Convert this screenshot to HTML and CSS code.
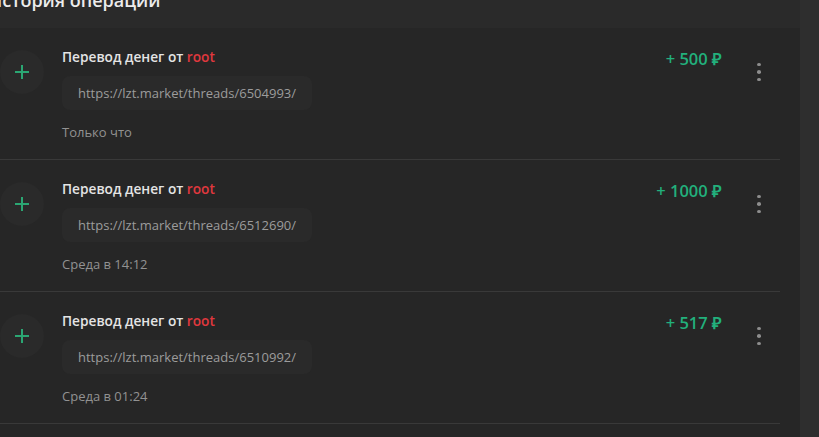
FILE: index.html
```html
<!DOCTYPE html>
<html lang="ru">
<head>
<meta charset="UTF-8">
<meta name="viewport" content="width=device-width, initial-scale=1.0">
<title>История операций</title>
<link rel="stylesheet" href="styles.css">
</head>

<body>
  <div class="page">
    <div class="main">
      <h2 class="title">История операций</h2>

      <div class="card">
        <div class="row">
          <div class="icon">
            <svg width="16" height="16" viewBox="0 0 16 16"><path d="M8 1v14M1 8h14" stroke="#2ba673" stroke-width="2"/></svg>
          </div>
          <div class="info">
            <div class="head">Перевод денег от <span class="user">root</span></div>
            <div class="link">https://lzt.market/threads/6504993/</div>
            <div class="date">Только что</div>
          </div>
          <div class="amount">+ 500 ₽</div>
          <div class="menu"><i></i><i></i><i></i></div>
        </div>

        <div class="row">
          <div class="icon">
            <svg width="16" height="16" viewBox="0 0 16 16"><path d="M8 1v14M1 8h14" stroke="#2ba673" stroke-width="2"/></svg>
          </div>
          <div class="info">
            <div class="head">Перевод денег от <span class="user">root</span></div>
            <div class="link">https://lzt.market/threads/6512690/</div>
            <div class="date">Среда в 14:12</div>
          </div>
          <div class="amount">+ 1000 ₽</div>
          <div class="menu"><i></i><i></i><i></i></div>
        </div>

        <div class="row">
          <div class="icon">
            <svg width="16" height="16" viewBox="0 0 16 16"><path d="M8 1v14M1 8h14" stroke="#2ba673" stroke-width="2"/></svg>
          </div>
          <div class="info">
            <div class="head">Перевод денег от <span class="user">root</span></div>
            <div class="link">https://lzt.market/threads/6510992/</div>
            <div class="date">Среда в 01:24</div>
          </div>
          <div class="amount">+ 517 ₽</div>
          <div class="menu"><i></i><i></i><i></i></div>
        </div>
      </div>
    </div>
    <div class="side"></div>
  </div>
</body>
</html>
```

FILE: styles.css
```css
* {
  box-sizing: border-box;
  margin: 0;
  padding: 0;
}

body {
  font-family: "Open Sans", Arial, sans-serif;
  background-color: #2a2a2a;
  color: #e6e6e6;
  overflow: hidden;
}

.page {
  display: flex;
  min-height: 437px;
}

.main {
  width: 800px;
  flex-shrink: 0;
}

.side {
  flex: 1;
  background-color: #2e2e2e;
}

.title {
  font-size: 18px;
  font-weight: 600;
  line-height: 28px;
  color: #ececec;
  margin: -14px 0 14px -12px;
  white-space: nowrap;
}

.card {
  background-color: #262626;
  padding-right: 20px;
  min-height: 420px;
}

.row {
  display: flex;
  height: 132px;
  border-bottom: 1px solid #393939;
}

.icon {
  width: 44px;
  height: 44px;
  margin-top: 22px;
  border-radius: 50%;
  background-color: #2a2a2a;
  display: flex;
  align-items: center;
  justify-content: center;
}

.info {
  flex: 1;
  margin-left: 18px;
  padding-top: 20px;
}

.head {
  font-size: 13.7px;
  font-weight: 600;
  line-height: 18px;
  color: #e4e4e4;
}

.user {
  color: #e0383e;
}

.link {
  display: inline-block;
  margin-top: 10px;
  padding: 0 16px;
  height: 34px;
  line-height: 34px;
  border-radius: 8px;
  background-color: #2a2a2a;
  font-size: 13px;
  color: #9c9c9c;
}

.date {
  margin-top: 13px;
  font-size: 13px;
  line-height: 18px;
  color: #929292;
}

.amount {
  padding-top: 20px;
  font-size: 16.5px;
  font-weight: 600;
  line-height: 22px;
  color: #22b07c;
  white-space: nowrap;
}

.menu {
  width: 16px;
  margin: 35px 13px 0 29px;
  display: flex;
  flex-direction: column;
  align-items: center;
  gap: 4px;
  height: 18px;
}

.menu i {
  display: block;
  width: 4px;
  height: 4px;
  border-radius: 50%;
  background-color: #8e8e8e;
}
```
